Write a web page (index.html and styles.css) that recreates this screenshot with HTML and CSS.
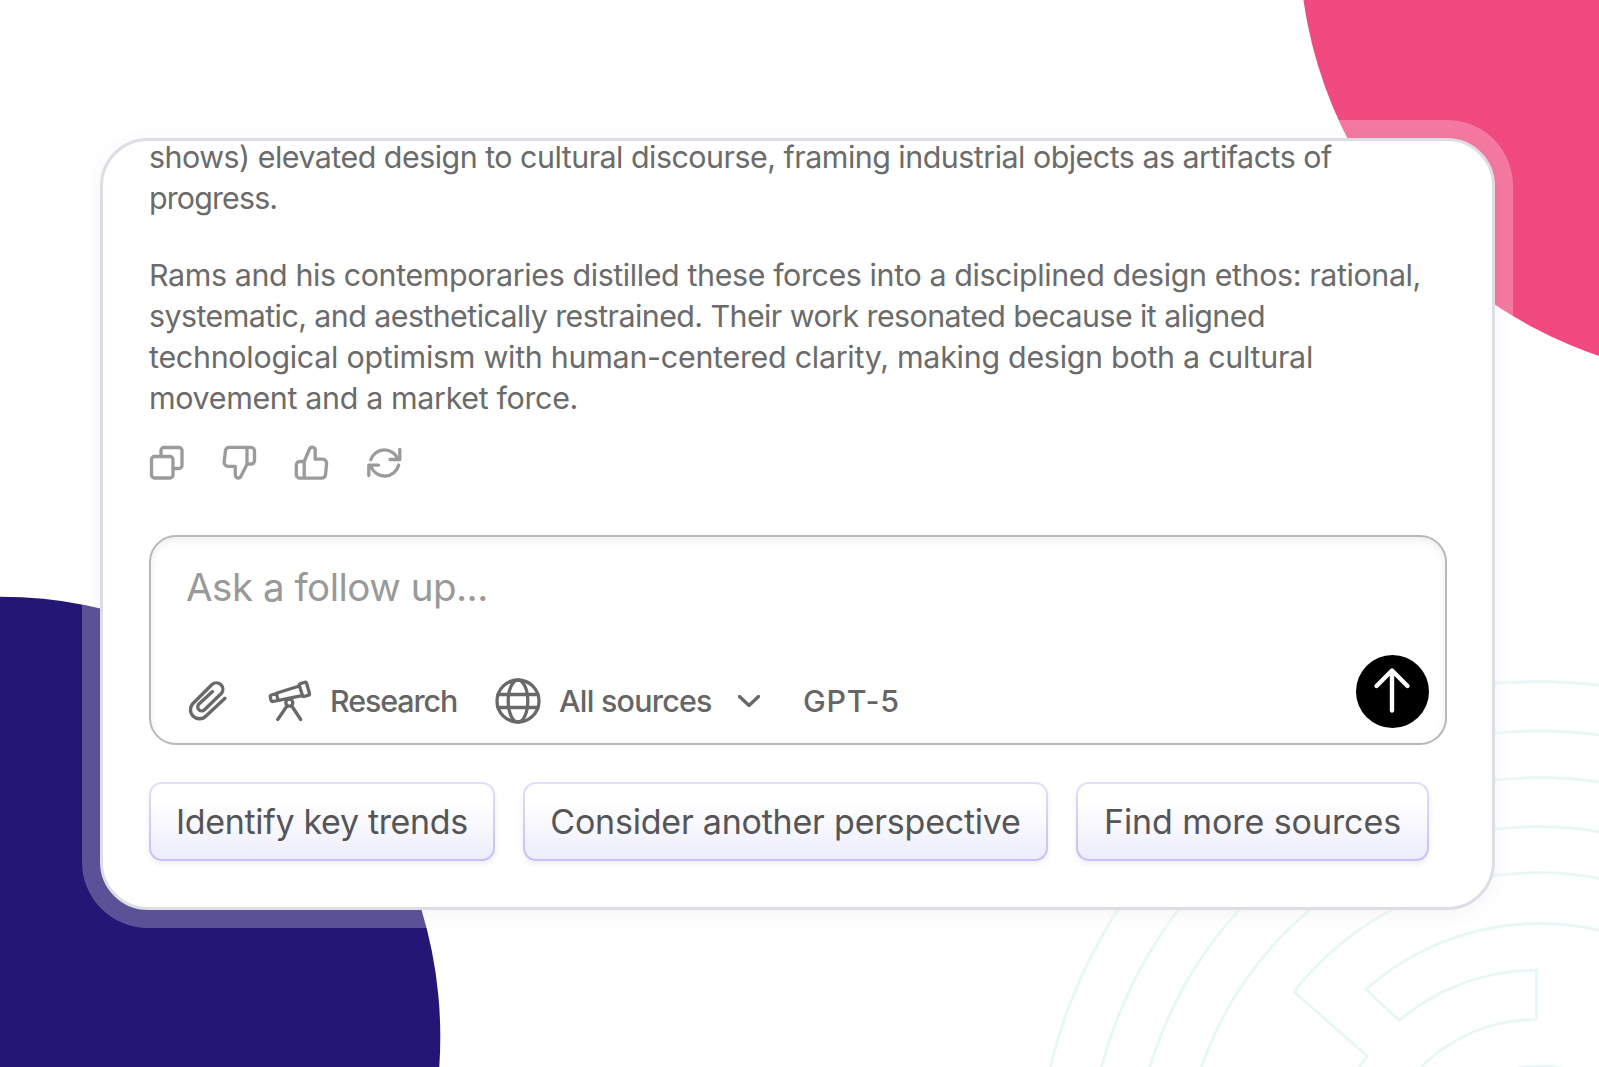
FILE: index.html
```
<!DOCTYPE html>
<html lang="en">
<head>
    <meta charset="UTF-8">
    <meta name="viewport" content="width=device-width, initial-scale=1.0">
    <title>Follow up</title>
    <link rel="stylesheet" href="styles.css">
</head>
<body>
    <svg class="backdrop" viewBox="0 0 1599 1067" aria-hidden="true">
        <circle cx="1741" cy="-62.6" r="442" fill="#f04a80"/>
        <circle cx="0" cy="1037" r="440.3" fill="#241675"/>
        <g fill="none" stroke="#e8f7f6" stroke-width="2.8">
            <circle cx="1539" cy="1184" r="502.4"/>
            <circle cx="1539" cy="1184" r="453"/>
            <circle cx="1539" cy="1184" r="406.3"/>
            <circle cx="1539" cy="1184" r="357.3"/>
            <path d="M1359 1068 L1367 1056 L1294 991.7 A311.7 311.7 0 0 1 1784 991.7"/>
            <path d="M1712 988.5 A261 261 0 0 0 1366 989.5 L1399.3 1020.3 A214 214 0 0 1 1536.5 970 V1019.3 A164.7 164.7 0 0 0 1420 1068"/>
            <circle cx="1539" cy="1184" r="118"/>
        </g>
    </svg>

    <main class="card">
        <div class="answer">
            <p><span class="line l1">shows) elevated design to cultural discourse, framing industrial objects as artifacts of</span>
            <span class="line l2">progress.</span></p>
            <p><span class="line l3">Rams and his contemporaries distilled these forces into a disciplined design ethos: rational,</span>
            <span class="line l4">systematic, and aesthetically restrained. Their work resonated because it aligned</span>
            <span class="line l5">technological optimism with human-centered clarity, making design both a cultural</span>
            <span class="line l6">movement and a market force.</span></p>
        </div>

        <div class="actions">
            <svg viewBox="0 0 36 36"><rect x="2.5" y="11.5" width="21.5" height="21.5" rx="3"/><path d="M12 11.5V5.5a3 3 0 0 1 3-3H30a3 3 0 0 1 3 3V20.5a3 3 0 0 1-3 3H24"/></svg>
            <svg viewBox="0 0 36 36"><path d="M26 2.3H8.5a4 4 0 0 0-4 3.2L3.2 16.6A4 4 0 0 0 7.1 21.3H14.3V30a3 3 0 0 0 5.4 1.8L26 19.2ZM26 2.3H30a3.5 3.5 0 0 1 3.5 3.5V15.500a3.5 3.5 0 0 1-3.5 3.5H26"/></svg>
            <svg viewBox="0 0 36 36"><path d="M10.2 33.2H27.500a4 4 0 0 0 4-3.4L32.6 18.7A4 4 0 0 0 28.600 14.2H21.2V5.2a3 3 0 0 0-5.5-1.7L10.2 16.5ZM10.2 33.2H5.8a3.5 3.5 0 0 1-3.5-3.5V20a3.5 3.5 0 0 1 3.5-3.5H10.2"/></svg>
            <svg viewBox="0 0 36 36"><path d="M4.8 14.800A14.5 14.5 0 0 1 32 14M33.8 4.300V14.500H24M32.700 20A14.5 14.5 0 0 1 5 21.500M2.800 30.500V20.200H12.500"/></svg>
        </div>

        <section class="composer">
            <div class="placeholder">Ask a follow up...</div>
            <div class="toolbar">
                <svg class="icon-clip" viewBox="0 0 40 42"><path d="M37 18.3 18 36A9 9 0 0 1 5 23.500L24 4.500A6.500 6.500 0 0 1 33.500 13.300L16.500 29.800A4 4 0 0 1 10.700 24.300L24.500 11.500"/></svg>
                <svg class="icon-scope" viewBox="0 0 44 42"><path d="M31.300 6 9 13M10.500 20.300 34 15.700M32 3.800 37 2.200Q38.200 2 38.600 3.200L41.500 13.500Q41.700 14.800 40.500 15.200L36 16.500Q34.900 16.700 34.500 15.500L31.200 5.200Q31 4.200 32 3.800ZM8.500 13.500 3.500 15Q2 15.500 2.300 17L3 20.300Q3.500 21.800 5 21.500L10 20.300ZM19 26 9.700 39.500M23.800 26 32.700 39.500"/><circle cx="21.300" cy="22.700" r="3.500"/></svg>
                <span class="tool research">Research</span>
                <svg class="icon-globe" viewBox="0 0 46 46"><circle cx="23" cy="23" r="21"/><ellipse cx="23" cy="23" rx="9.8" ry="21"/><path d="M3 16.5H43M3 29.5H43"/></svg>
                <span class="tool sources">All sources</span>
                <svg class="icon-chevron" viewBox="0 0 22 12"><path d="M1.5 1.5 11 10.5 20.5 1.5"/></svg>
                <span class="tool model">GPT-5</span>
            </div>
            <button class="send" type="button" aria-label="Send">
                <svg viewBox="0 0 73 73"><path d="M36 55.500V16M20.500 31 36 15.500 51.500 31"/></svg>
            </button>
        </section>

        <div class="chips">
            <button class="chip chip-trends" type="button">Identify key trends</button>
            <button class="chip chip-perspective" type="button">Consider another perspective</button>
            <button class="chip chip-sources" type="button">Find more sources</button>
        </div>
    </main>
</body>
</html>
```
FILE: styles.css
```
* {
    box-sizing: border-box;
}
body {
    font-family: Inter, 'Liberation Sans', sans-serif;
    margin: 0;
    width: 1599px;
    height: 1067px;
    padding: 138px 0 0 100px;
    background-color: #ffffff;
    overflow: hidden;
}
svg {
    display: block;
    flex: none;
}
.backdrop {
    position: absolute;
    top: 0;
    left: 0;
    width: 1599px;
    height: 1067px;
    z-index: -1;
}
.card {
    width: 1395px;
    height: 772px;
    padding: 0 46px;
    border: 3px solid #dddde6;
    border-radius: 48px;
    background-color: #ffffff;
    box-shadow: 0 0 0 18px rgba(255, 255, 255, 0.26), 0 4px 20px rgba(0, 0, 0, 0.06);
    overflow: hidden;
}
.answer {
    margin-top: -3.6px;
    color: #6b6b6b;
    font-size: 30.4px;
    line-height: 40.8px;
}
.answer p {
    margin: 0 0 36.2px;
}
.line {
    display: block;
    white-space: nowrap;
}
.l1 {
    letter-spacing: -0.505px;
}
.l2 {
    letter-spacing: -0.85px;
}
.l3 {
    letter-spacing: -0.385px;
}
.l4 {
    letter-spacing: -0.57px;
}
.l5 {
    letter-spacing: -0.26px;
}
.l6 {
    letter-spacing: -0.33px;
}
.actions {
    display: flex;
    gap: 36.3px;
    margin-top: -9.4px;
}
.actions svg {
    width: 36px;
    height: 36px;
    fill: none;
    stroke: #9b9b9b;
    stroke-width: 3.3;
    stroke-linejoin: round;
    stroke-linecap: round;
}
.composer {
    position: relative;
    display: flex;
    flex-direction: column;
    justify-content: space-between;
    width: 1298px;
    height: 210px;
    margin-top: 54px;
    padding: 27px 36px 16px 35px;
    border: 2px solid #b8b8b8;
    border-radius: 27px;
    box-shadow: inset 0 3px 8px rgba(0, 0, 0, 0.07);
}
.placeholder {
    color: #999999;
    font-size: 38.5px;
    line-height: 47px;
    letter-spacing: -0.48px;
}
.toolbar {
    display: flex;
    align-items: center;
    height: 52px;
    color: #666666;
}
.toolbar svg {
    fill: none;
    stroke: #696969;
    stroke-width: 3.3;
    stroke-linecap: round;
    stroke-linejoin: round;
}
.tool {
    font-size: 30.4px;
    font-weight: 450;
    line-height: 40px;
    white-space: nowrap;
}
.icon-clip {
    width: 40px;
    height: 42px;
    margin-left: 2px;
}
.icon-scope {
    width: 44px;
    height: 42px;
    margin-left: 40px;
}
.research {
    width: 127px;
    margin-left: 18px;
    letter-spacing: -1.1px;
}
.icon-globe {
    width: 46px;
    height: 46px;
    margin-left: 38px;
}
.sources {
    width: 152px;
    margin-left: 18px;
    letter-spacing: -0.75px;
}
.icon-chevron {
    width: 22px;
    height: 12px;
    margin-left: 27px;
}
.model {
    margin-left: 43px;
    letter-spacing: 0.8px;
}
.send {
    position: absolute;
    right: 16px;
    bottom: 15px;
    width: 73px;
    height: 73px;
    padding: 0;
    border: 0;
    border-radius: 50%;
    background-color: #000000;
}
.send svg {
    fill: none;
    stroke: #ffffff;
    stroke-width: 4.4;
    stroke-linecap: round;
    stroke-linejoin: round;
}
.chips {
    display: flex;
    gap: 28px;
    margin-top: 37px;
}
.chip {
    height: 79px;
    padding: 0;
    border: 2.5px solid transparent;
    border-radius: 13px;
    background: linear-gradient(#ffffff 25%, #ededfc) padding-box, linear-gradient(#e2dffa, #c6bdfb) border-box;
    box-shadow: 0 3px 6px rgba(0, 0, 0, 0.07);
    color: #555558;
    font-family: inherit;
    font-size: 34px;
    white-space: nowrap;
}
.chip-trends {
    width: 346px;
    letter-spacing: -0.33px;
}
.chip-perspective {
    width: 525px;
    letter-spacing: -0.22px;
}
.chip-sources {
    width: 353px;
    letter-spacing: -0.08px;
}
```
